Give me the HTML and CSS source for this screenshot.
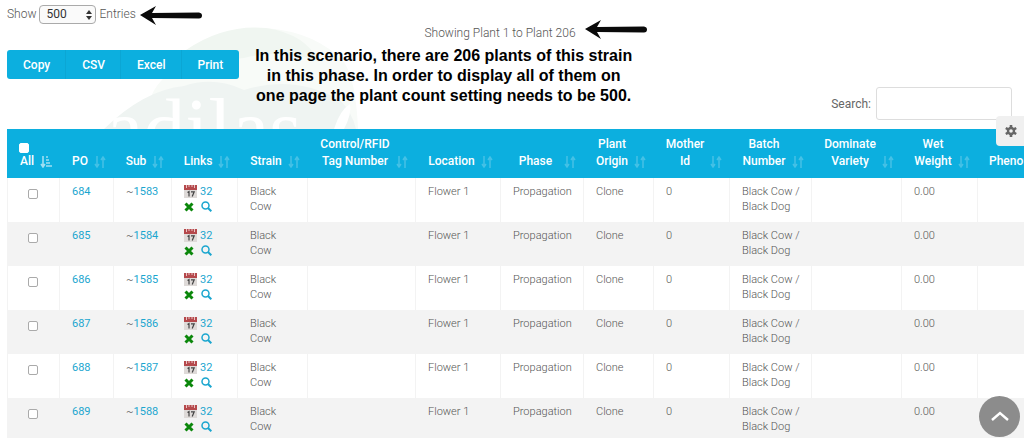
FILE: index.html
```html
<!DOCTYPE html>
<html lang="en">
<head>
    <meta charset="UTF-8">
    <meta name="viewport" content="width=device-width, initial-scale=1.0">
    <title>Plants</title>
    <link rel="stylesheet" href="styles.css">
</head>
<body>
    <!-- Shared icons -->
    <svg class="sprite" aria-hidden="true">
        <symbol id="sort" viewBox="0 0 12 12">
            <path d="M3 0v10M1 8l2 3 2-3M9 12V2M7 4l2-3 2 3" fill="none" stroke="currentColor" stroke-width="1.5"/>
        </symbol>
        <symbol id="sort-asc" viewBox="0 0 12 12">
            <path d="M3 0v10M1 8l2 3 2-3M6 1h2M6 4h3M6 7h4M6 10h6" fill="none" stroke="currentColor" stroke-width="1.6"/>
        </symbol>
        <symbol id="calendar" viewBox="0 0 13 13">
            <rect x="0" y="1" width="13" height="12" fill="#dedad8"/>
            <rect x="0" y="0" width="13" height="5" fill="#b5494c"/>
            <path d="M2.5 0v3M5 0v2M8 0v2M10.5 0v3" stroke="#e8c4c4" stroke-width="1"/>
            <path d="M3.5 7.5l1.500-1v5M7 6.800h3.200l-2 4.700" fill="none" stroke="#444" stroke-width="1.2"/>
        </symbol>
        <symbol id="remove" viewBox="0 0 10 10">
            <path d="M1.500 1.500l7 7M8.500 1.500l-7 7" stroke="#0b870b" stroke-width="3"/>
        </symbol>
        <symbol id="magnifier" viewBox="0 0 11 11">
            <circle cx="4.5" cy="4.5" r="3.5" fill="none" stroke="currentColor" stroke-width="1.5"/>
            <path d="M7 7l3.300 3.300" stroke="currentColor" stroke-width="2"/>
        </symbol>
        <symbol id="arrow" viewBox="0 0 62 20">
            <path d="M0 9L16 0L12 7L59 6.500Q62 7 62 9.500Q62 12.500 59 12.500L12 12L16 19Z" fill="#0a0a0a"/>
        </symbol>
    </svg>

    <div class="page">
        <!-- Logo watermark -->
        <svg class="watermark" viewBox="0 0 290 115" aria-hidden="true">
            <path d="M92 46Q120 16 172 14Q222 18 250 48Q262 66 264 115H60Q40 80 92 46Z" fill="#f8fbf8"/>
            <path d="M92 36Q130 10 172 14Q212 20 225 48Q190 34 150 44Q120 48 92 36Z" fill="#f0f6f1"/>
            <path d="M10 115Q50 76 90 72Q120 62 150 76Q200 60 246 86Q258 98 262 115Z" fill="#eff4f2"/>
            <text x="12" y="143" class="watermark-text">adilas</text>
            <path d="M240 115Q246 96 256 90Q258 100 250 115Z" fill="#fff"/>
        </svg>

        <!-- Page length -->
        <div class="length-row">
            <label for="entries">Show</label>
            <span class="select-box">
                <select id="entries">
                    <option>100</option>
                    <option selected>500</option>
                </select>
                <svg class="select-arrows" viewBox="0 0 6 10"><path d="M0 4l3-4 3 4zM0 6l3 4 3-4z" fill="#333"/></svg>
            </span>
            <span>Entries</span>
            <svg class="arrow-entries"><use href="#arrow"/></svg>
        </div>

        <div class="info-row">
            <span>Showing Plant 1 to Plant 206</span>
            <svg class="arrow-info"><use href="#arrow"/></svg>
        </div>

        <!-- Export buttons and note -->
        <div class="tools">
            <div class="export-buttons">
                <button type="button">Copy</button>
                <button type="button">CSV</button>
                <button type="button">Excel</button>
                <button type="button">Print</button>
            </div>
            <p class="note">In this scenario, there are 206 plants of this strain<br>in this phase. In order to display all of them on<br>one page the plant count setting needs to be 500.</p>
            <div class="search">
                <label for="search">Search:</label>
                <input type="text" id="search">
            </div>
        </div>

        <!-- Plant list -->
        <div class="table-wrap">
            <table>
                <colgroup>
                    <col class="w-all"><col class="w-po"><col class="w-sub"><col class="w-links"><col class="w-strain">
                    <col class="w-tag"><col class="w-location"><col class="w-phase"><col class="w-origin"><col class="w-mother">
                    <col class="w-batch"><col class="w-variety"><col class="w-weight"><col class="w-pheno">
                </colgroup>
                <thead>
                    <tr>
                        <th><input type="checkbox" class="check-all" aria-label="Select all">All<svg class="sort active"><use href="#sort-asc"/></svg></th>
                        <th>PO<svg class="sort"><use href="#sort"/></svg></th>
                        <th>Sub<svg class="sort"><use href="#sort"/></svg></th>
                        <th>Links<svg class="sort"><use href="#sort"/></svg></th>
                        <th>Strain<svg class="sort"><use href="#sort"/></svg></th>
                        <th>Control/RFID<br>Tag Number<svg class="sort"><use href="#sort"/></svg></th>
                        <th>Location<svg class="sort"><use href="#sort"/></svg></th>
                        <th>Phase<svg class="sort"><use href="#sort"/></svg></th>
                        <th>Plant<br>Origin<svg class="sort"><use href="#sort"/></svg></th>
                        <th>Mother<br>Id<svg class="sort"><use href="#sort"/></svg></th>
                        <th>Batch<br>Number<svg class="sort"><use href="#sort"/></svg></th>
                        <th>Dominate<br>Variety<svg class="sort"><use href="#sort"/></svg></th>
                        <th>Wet<br>Weight<svg class="sort"><use href="#sort"/></svg></th>
                        <th class="pheno">Pheno</th>
                    </tr>
                </thead>
                <tbody id="plants"></tbody>
            </table>
        </div>

        <button type="button" class="settings" aria-label="Settings">
            <svg viewBox="0 0 12 12"><path d="M6 2.800v-2.800M6 9.200v2.800M3.200 4.400L.8 3M8.800 7.600l2.400 1.400M3.200 7.600L.8 9M8.800 4.400L11.200 3" stroke="#666" stroke-width="2.6"/><circle cx="6" cy="6" r="3" fill="none" stroke="#666" stroke-width="2.4"/></svg>
        </button>
    </div>

    <button type="button" class="to-top" aria-label="Back to top">
        <svg viewBox="0 0 18 10"><path d="M1 9l8-7 8 7" fill="none" stroke="#fff" stroke-width="2.4"/></svg>
    </button>

    <script>
        var rows = '';
        for (var i = 0; i < 6; i++) {
            var po = 684 + i;
            var sub = 1583 + i;
            rows += '<tr>' +
                '<td class="check"><input type="checkbox" aria-label="Select ' + po + '"></td>' +
                '<td><a href="#">' + po + '</a></td>' +
                '<td>~<a href="#">' + sub + '</a></td>' +
                '<td class="links">' +
                    '<div><svg class="calendar"><use href="#calendar"/></svg><a href="#">32</a></div>' +
                    '<div><svg class="remove"><use href="#remove"/></svg><a href="#" aria-label="View"><svg class="magnifier"><use href="#magnifier"/></svg></a></div>' +
                '</td>' +
                '<td>Black<br>Cow</td><td></td><td>Flower 1</td><td>Propagation</td><td>Clone</td><td>0</td>' +
                '<td>Black Cow /<br>Black Dog</td><td></td><td>0.00</td><td></td>' +
                '</tr>';
        }
        document.getElementById('plants').innerHTML = rows;
    </script>
</body>
</html>
```
FILE: styles.css
```css
* {
    box-sizing: border-box;
}

body {
    margin: 0;
    font-family: Roboto, "Liberation Sans", sans-serif;
    font-size: 12px;
    font-weight: 300;
    color: #555;
    background-color: #fff;
    overflow: hidden;
}

.sprite {
    position: absolute;
    width: 0;
    height: 0;
}

.page {
    position: relative;
    padding: 4px 0 0 7px;
}

a {
    color: #1ba6cf;
    font-weight: 400;
    text-decoration: none;
}

button {
    font-family: inherit;
    cursor: pointer;
}

/* Faded logo behind the toolbar */
.watermark {
    position: absolute;
    top: 14px;
    left: 94px;
    width: 290px;
    height: 115px;
    z-index: -1;
}

.watermark-text {
    font-family: "Liberation Serif", serif;
    font-size: 84px;
    fill: #fff;
}

/* Page length */
.length-row {
    display: flex;
    align-items: center;
    gap: 3px;
    height: 20px;
}

.select-box {
    position: relative;
}

.select-box select {
    display: block;
    appearance: none;
    width: 57px;
    height: 19px;
    padding: 0 6px;
    border: 1px solid #aaa;
    border-radius: 4px;
    background-color: #fafafa;
    font-family: inherit;
    font-size: 12px;
    color: #333;
}

.select-arrows {
    position: absolute;
    top: 5px;
    right: 4px;
    width: 6px;
    height: 10px;
}

.arrow-entries {
    width: 62px;
    height: 20px;
    margin: 3px 0 0 1px;
}

.info-row {
    display: flex;
    align-items: center;
    justify-content: center;
    gap: 9px;
    height: 18px;
    padding-left: 40px;
}

.arrow-info {
    width: 62px;
    height: 20px;
    margin-bottom: 6px;
}

/* Toolbar */
.tools {
    display: flex;
    align-items: flex-start;
    padding: 4px 12px 8px 0;
}

.export-buttons {
    display: flex;
    margin-top: 4px;
    border-radius: 3px;
    overflow: hidden;
    background-color: #0cafdf;
}

.export-buttons button {
    height: 29px;
    padding: 0 16px;
    border: none;
    box-shadow: -1px 0 #0ba6d4;
    background: none;
    color: #fff;
    font-size: 12px;
    font-weight: 500;
}

.note {
    margin: 0 0 0 16px;
    font-family: "Liberation Sans", Arial, sans-serif;
    font-size: 16px;
    font-weight: bold;
    line-height: 20px;
    text-align: center;
    color: #000;
}

.search {
    display: flex;
    align-items: center;
    gap: 5px;
    margin: 41px 0 0 auto;
    font-weight: 400;
    color: #666;
}

.search input {
    width: 136px;
    height: 33px;
    border: 1px solid #ddd;
    border-radius: 3px;
    background-color: #fff;
}

/* Plant list */
.table-wrap {
    padding-top: 1px;
    overflow: hidden;
}

table {
    width: 1100px;
    table-layout: fixed;
    border-collapse: separate;
    border-spacing: 0;
}

.w-all { width: 52px; }
.w-po { width: 54px; }
.w-sub { width: 58px; }
.w-links { width: 66px; }
.w-strain { width: 70px; }
.w-tag { width: 108px; }
.w-location { width: 85px; }
.w-phase { width: 83px; }
.w-origin { width: 70px; }
.w-mother { width: 76px; }
.w-batch { width: 82px; }
.w-variety { width: 90px; }
.w-weight { width: 76px; }

th {
    position: relative;
    padding: 7px 24px 8px 12px;
    background-color: #0cafdf;
    color: #fff;
    font-weight: 500;
    line-height: 17px;
    text-align: center;
    vertical-align: bottom;
    white-space: nowrap;
}

th.pheno {
    text-align: left;
}

.sort {
    position: absolute;
    right: 7px;
    bottom: 10px;
    width: 12px;
    height: 12px;
    color: #45c1e6;
}

.sort.active {
    color: #a0dff2;
}

.check-all {
    display: block;
    width: 10px;
    height: 10px;
    margin: 0;
}

td {
    height: 44px;
    padding: 6px 0 6px 12px;
    border-left: 1px solid #f3f3f3;
    line-height: 15px;
    font-size: 11px;
    vertical-align: top;
    white-space: nowrap;
}

tbody tr:nth-child(even) td {
    background-color: #f3f3f3;
}

input[type="checkbox"] {
    appearance: none;
    border: 1px solid #aaa;
    border-radius: 2px;
    background-color: #fff;
}

th .check-all[type="checkbox"] {
    border-color: #fff;
}

.check input {
    display: block;
    width: 10px;
    height: 10px;
    margin: 5px 0 0 8px;
}

.links div {
    display: flex;
    align-items: center;
    height: 15px;
}

.calendar {
    width: 13px;
    height: 13px;
    margin-right: 3px;
}

.remove {
    width: 10px;
    height: 10px;
    margin-right: 7px;
}

.magnifier {
    display: block;
    width: 11px;
    height: 11px;
}

/* Floating buttons */
.settings {
    position: absolute;
    top: 116px;
    right: 0;
    width: 28px;
    height: 30px;
    padding: 2px 0 0 1px;
    border: none;
    border-radius: 4px 0 0 4px;
    background-color: #f0f0f0;
}

.settings svg {
    width: 12px;
    height: 12px;
}

.to-top {
    position: fixed;
    right: 4px;
    bottom: 1px;
    width: 41px;
    height: 41px;
    padding: 0;
    border: none;
    border-radius: 50%;
    background-color: #8c8c8c;
}

.to-top svg {
    width: 18px;
    height: 10px;
}
```
